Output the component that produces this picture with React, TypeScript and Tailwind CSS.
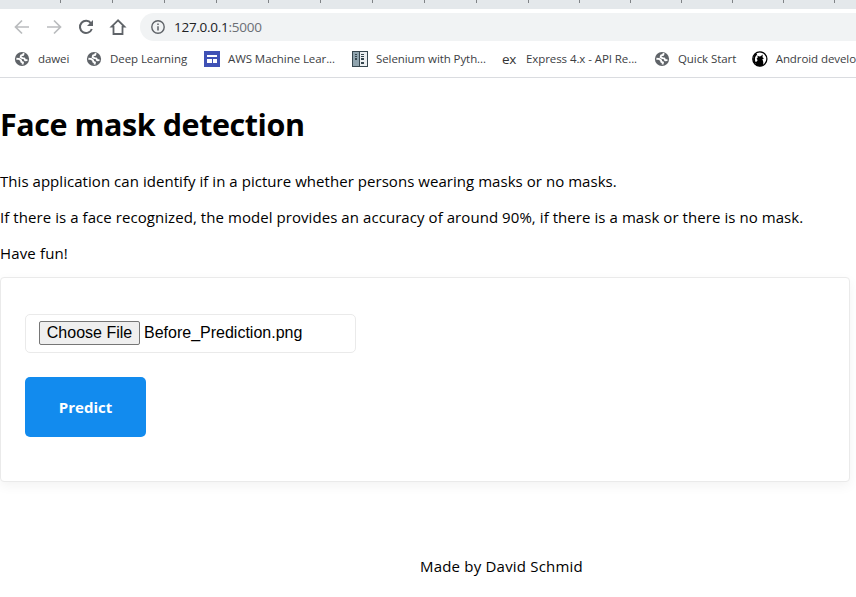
import type { ReactNode } from "react";

function Globe() {
  return (
    <svg viewBox="0 0 16 16" className="h-4 w-4">
      <circle cx="8" cy="8" r="7.1" fill="#5f6368" />
      <path
        d="M9.8 2.2 9 4 7.1 4.4 6.6 6.2 8.4 7.1 10.3 7.4 11.1 9.2 13.5 9.1M2.4 7.7 4.9 7.9 7 9.2 7.3 10.8 9 11.4 8.4 13.5"
        fill="none"
        stroke="#fff"
        strokeWidth="1.9"
        strokeLinejoin="round"
      />
    </svg>
  );
}

function SitesIcon() {
  return (
    <svg viewBox="0 0 16 16" className="h-4 w-4" shapeRendering="crispEdges">
      <path fill="#3f51b5" d="M0 0h16v16H0z" />
      <path fill="#fff" d="M3 4h10v2H3zM3 8h5v4H3zM9 8h4v4H9z" />
    </svg>
  );
}

function BookIcon() {
  return (
    <svg viewBox="0 0 16 16" className="h-4 w-4" shapeRendering="crispEdges">
      <path fill="#37474f" d="M0 0h16v16H0z" />
      <path fill="#90a4ae" d="M1 1h6v14H1z" />
      <path fill="#eceff1" d="M8 1h7v14H8z" />
      <path fill="#37474f" d="M3 3h2v1H3zM3 5h2v1H3zM3 7h2v2H3zM9 3h3v1H9zM9 5h3v1H9zM9 7h3v2H9zM9 11h3v2H9z" />
    </svg>
  );
}

function ExpressIcon() {
  return (
    <span className="block w-4 font-['Open_Sans',sans-serif] text-[13.5px] leading-4 tracking-[-0.3px] text-[#333]">
      ex
    </span>
  );
}

function CatIcon() {
  return (
    <svg viewBox="0 0 16 16" className="h-4 w-4">
      <circle cx="8" cy="8" r="7.2" fill="#fff" stroke="#000" strokeWidth="1.3" />
      <path
        d="M5.6 4.4 7.2 5.4l1.6-.2 2.2-1.8-.3 2.8 1.5 1.2-1.7.8c1.1 1.7 1.4 4.4.6 6.5-1.8 1-5 1-7-.2L2.8 11c1.5.2 2.6-.6 2.9-2L4.6 7.8l1.2-1z"
        fill="#000"
      />
      <path d="M3 12C1.4 8.6 2 5.2 4.6 2.8" fill="none" stroke="#000" strokeWidth="1.9" />
    </svg>
  );
}

const bookmarks: { label: string; box: string; icon: ReactNode }[] = [
  { label: "dawei", box: "w-[72px]", icon: <Globe /> },
  { label: "Deep Learning", box: "w-[118px]", icon: <Globe /> },
  { label: "AWS Machine Lear...", box: "w-[148px]", icon: <SitesIcon /> },
  { label: "Selenium with Pyth...", box: "w-[150px]", icon: <BookIcon /> },
  { label: "Express 4.x - API Re...", box: "w-[152px]", icon: <ExpressIcon /> },
  { label: "Quick Start", box: "w-[98px]", icon: <Globe /> },
  { label: "Android develo", box: "w-[104px]", icon: <CatIcon /> },
];

const ticks = [60, 112, 164, 216, 268, 320, 372, 424, 476, 528, 579, 630, 681, 732, 783, 834];

function Toolbar() {
  return (
    <div className="flex h-8 items-center pt-1">
      <svg width="140" height="28" viewBox="0 0 140 28" fill="none" className="shrink-0">
        <path d="M29 14H16M22 7.5 15.5 14l6.5 6.5" stroke="#babcbe" strokeWidth="1.7" />
        <path d="M47 14h13M54 7.5l6.5 6.5-6.5 6.5" stroke="#babcbe" strokeWidth="1.7" />
        <path d="M91 10.3A6.1 6.1 0 1 0 91.8 16" stroke="#5f6368" strokeWidth="2" />
        <path d="M93 7v6h-6z" fill="#5f6368" />
        <path d="M118 7.3l-6.4 6.4h1.9v7.3h9v-7.3h1.9z" stroke="#5f6368" strokeWidth="1.8" />
      </svg>
      <div className="flex h-7 flex-1 items-center rounded-l-full bg-[#f1f3f4] pl-[11px]">
        <svg width="14" height="14" viewBox="0 0 14 14" fill="none" className="shrink-0">
          <circle cx="7" cy="7" r="6.2" stroke="#5f6368" strokeWidth="1.4" />
          <path d="M7 6.2v4.3M7 3.4v1.6" stroke="#5f6368" strokeWidth="1.5" />
        </svg>
        <span className="ml-[9px] text-[13.5px] leading-7 tracking-[-0.27px] text-[#202124]">
          127.0.0.1<span className="text-[#6b6f74]">:5000</span>
        </span>
      </div>
    </div>
  );
}

export default function App() {
  return (
    <div className="h-[597px] w-[856px] overflow-hidden bg-white font-['Open_Sans',sans-serif] text-black">
      <header className="h-[78px] overflow-hidden border-b border-[#dadce0]">
        <div className="h-[9px] bg-[#e4e8eb]">
          <svg width="856" height="3" className="block" shapeRendering="crispEdges">
            {ticks.map((x) => (
              <rect key={x} x={x} y="0" width="1" height="2.5" fill="#808387" />
            ))}
          </svg>
        </div>
        <Toolbar />
        <nav className="flex h-9 items-center pl-[14px]">
          {bookmarks.map((b) => (
            <div key={b.label} className={`flex shrink-0 items-center gap-2 ${b.box}`}>
              {b.icon}
              <span className="text-[11.5px] leading-4 tracking-[-0.08px] whitespace-nowrap text-[#3c4043]">
                {b.label}
              </span>
            </div>
          ))}
        </nav>
      </header>

      <main>
        <h1 className="pt-[25px] text-[30.5px] leading-[43px] font-bold tracking-[-0.44px]">Face mask detection</h1>
        <div className="flex flex-col gap-[15px] pt-[25px] text-[15px] leading-[21px] whitespace-nowrap">
          <p className="tracking-[0.045px]">
            This application can identify if in a picture whether persons wearing masks or no masks.
          </p>
          <p className="tracking-[0.065px]">
            If there is a face recognized, the model provides an accuracy of around 90%, if there is a mask or there is
            no mask.
          </p>
          <p className="tracking-[0.15px]">Have fun!</p>
        </div>

        <form className="mt-[13px] h-[205px] w-[850px] rounded border border-[#eaeaea] bg-white px-6 pt-9 shadow-[0_4px_12px_rgba(0,0,0,0.05)]">
          <div className="flex h-[39px] w-[331px] items-start rounded-[5px] border border-[#eaeaea] pt-[6px] pl-[13px] font-['Liberation_Sans',Arial,sans-serif] text-base">
            <button
              type="button"
              className="h-6 w-[101px] rounded-[2px] border border-[#767676] bg-[#efefef] leading-[22px] whitespace-nowrap"
            >
              Choose File
            </button>
            <span className="ml-1 leading-6">Before_Prediction.png</span>
          </div>
          <button
            type="button"
            className="mt-6 block h-[60px] w-[121px] rounded-[5px] bg-[#128bee] text-[15px] font-bold text-white"
          >
            Predict
          </button>
        </form>

        <footer className="pt-[74px] pl-[420px] text-[15px] leading-[21px] tracking-[0.2px]">
          Made by David Schmid
        </footer>
      </main>
    </div>
  );
}
